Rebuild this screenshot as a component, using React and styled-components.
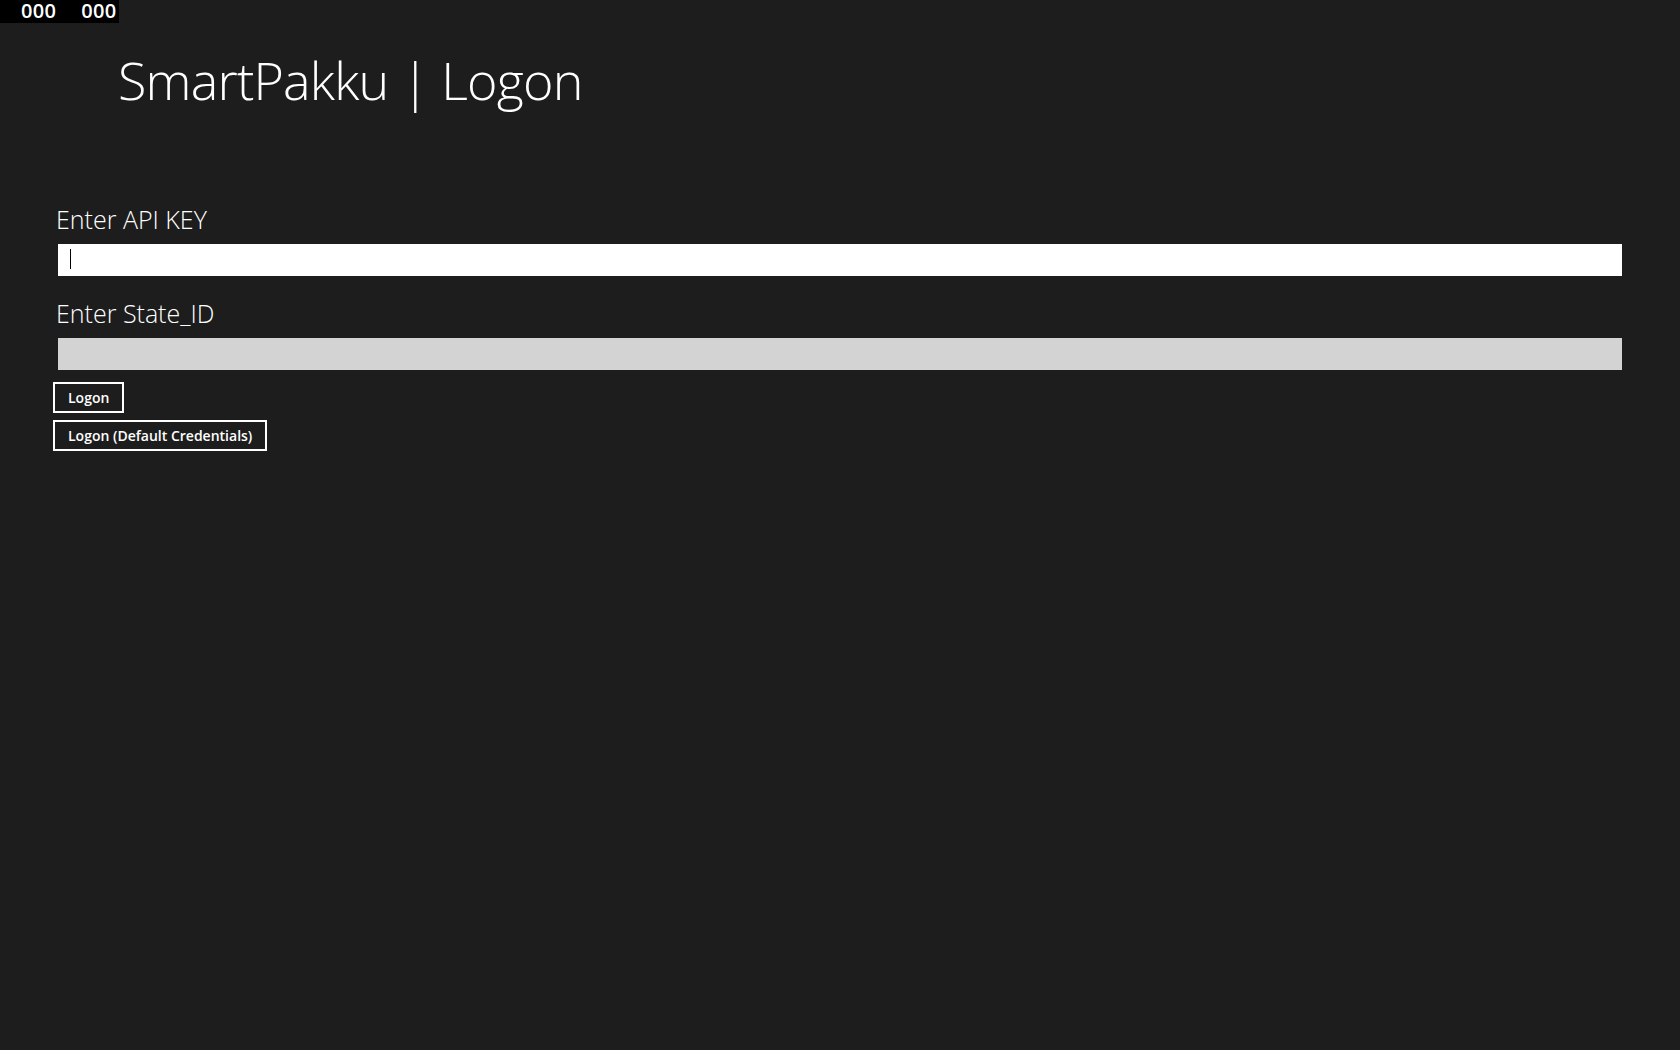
import styled, { createGlobalStyle } from "styled-components"

const GlobalStyle = createGlobalStyle`
  html, body {
    margin: 0;
    padding: 0;
    background: #1d1d1d;
    font-family: "Open Sans", "Liberation Sans", sans-serif;
  }
`

const Page = styled.div`
  min-height: 1050px;
  background: #1d1d1d;
  color: #fff;
`

const Counter = styled.div`
  display: flex;
  width: 119px;
  height: 23px;
  background: #000;
  font-size: 20px;
  font-weight: 600;
  line-height: 22px;
  letter-spacing: 0.3px;
  color: #fff;
  span {
    margin-left: 21px;
  }
  span + span {
    margin-left: 25px;
  }
`

const Title = styled.h1`
  margin: 22px 0 0 118px;
  font-size: 52px;
  font-weight: 300;
  line-height: 70px;
  letter-spacing: -0.8px;
`

const Form = styled.form`
  display: flex;
  flex-direction: column;
  padding: 87px 58px 0 56px;
`

const Label = styled.label`
  font-size: 25px;
  font-weight: 300;
  line-height: 34px;
  margin-bottom: 8px;
  & + div + & {
    margin-top: 8px;
  }
`

const FieldWrap = styled.div`
  position: relative;
  width: 1564px;
  margin: 0 0 12px 2px;
`

const Field = styled.input`
  display: block;
  box-sizing: border-box;
  width: 100%;
  height: 32px;
  margin: 0;
  border: none;
  outline: none;
  padding: 0 11px;
  font-family: inherit;
  font-size: 16px;
  background: ${(p) => (p.$disabled ? "#d3d3d3" : "#fff")};
  caret-color: transparent;
`

const Caret = styled.span`
  position: absolute;
  left: 12px;
  top: 5px;
  width: 1px;
  height: 20px;
  background: #000;
  pointer-events: none;
`

const Buttons = styled.div`
  display: flex;
  flex-direction: column;
  align-items: flex-start;
  gap: 7px;
  margin-left: -3px;
`

const Button = styled.button`
  box-sizing: border-box;
  height: 31px;
  padding: 0 13px;
  background: transparent;
  border: 2px solid #fff;
  color: #fff;
  font-family: inherit;
  font-size: 14px;
  font-weight: 600;
  cursor: pointer;
`

export default function App() {
  return (
    <Page>
      <GlobalStyle />
      <Counter>
        <span>000</span>
        <span>000</span>
      </Counter>
      <Title>SmartPakku | Logon</Title>
      <Form onSubmit={(e) => e.preventDefault()}>
        <Label htmlFor="apikey">Enter API KEY</Label>
        <FieldWrap>
          <Field id="apikey" />
          <Caret />
        </FieldWrap>
        <Label htmlFor="stateid">Enter State_ID</Label>
        <FieldWrap>
          <Field id="stateid" $disabled />
        </FieldWrap>
        <Buttons>
          <Button type="button">Logon</Button>
          <Button type="button">Logon (Default Credentials)</Button>
        </Buttons>
      </Form>
    </Page>
  )
}
